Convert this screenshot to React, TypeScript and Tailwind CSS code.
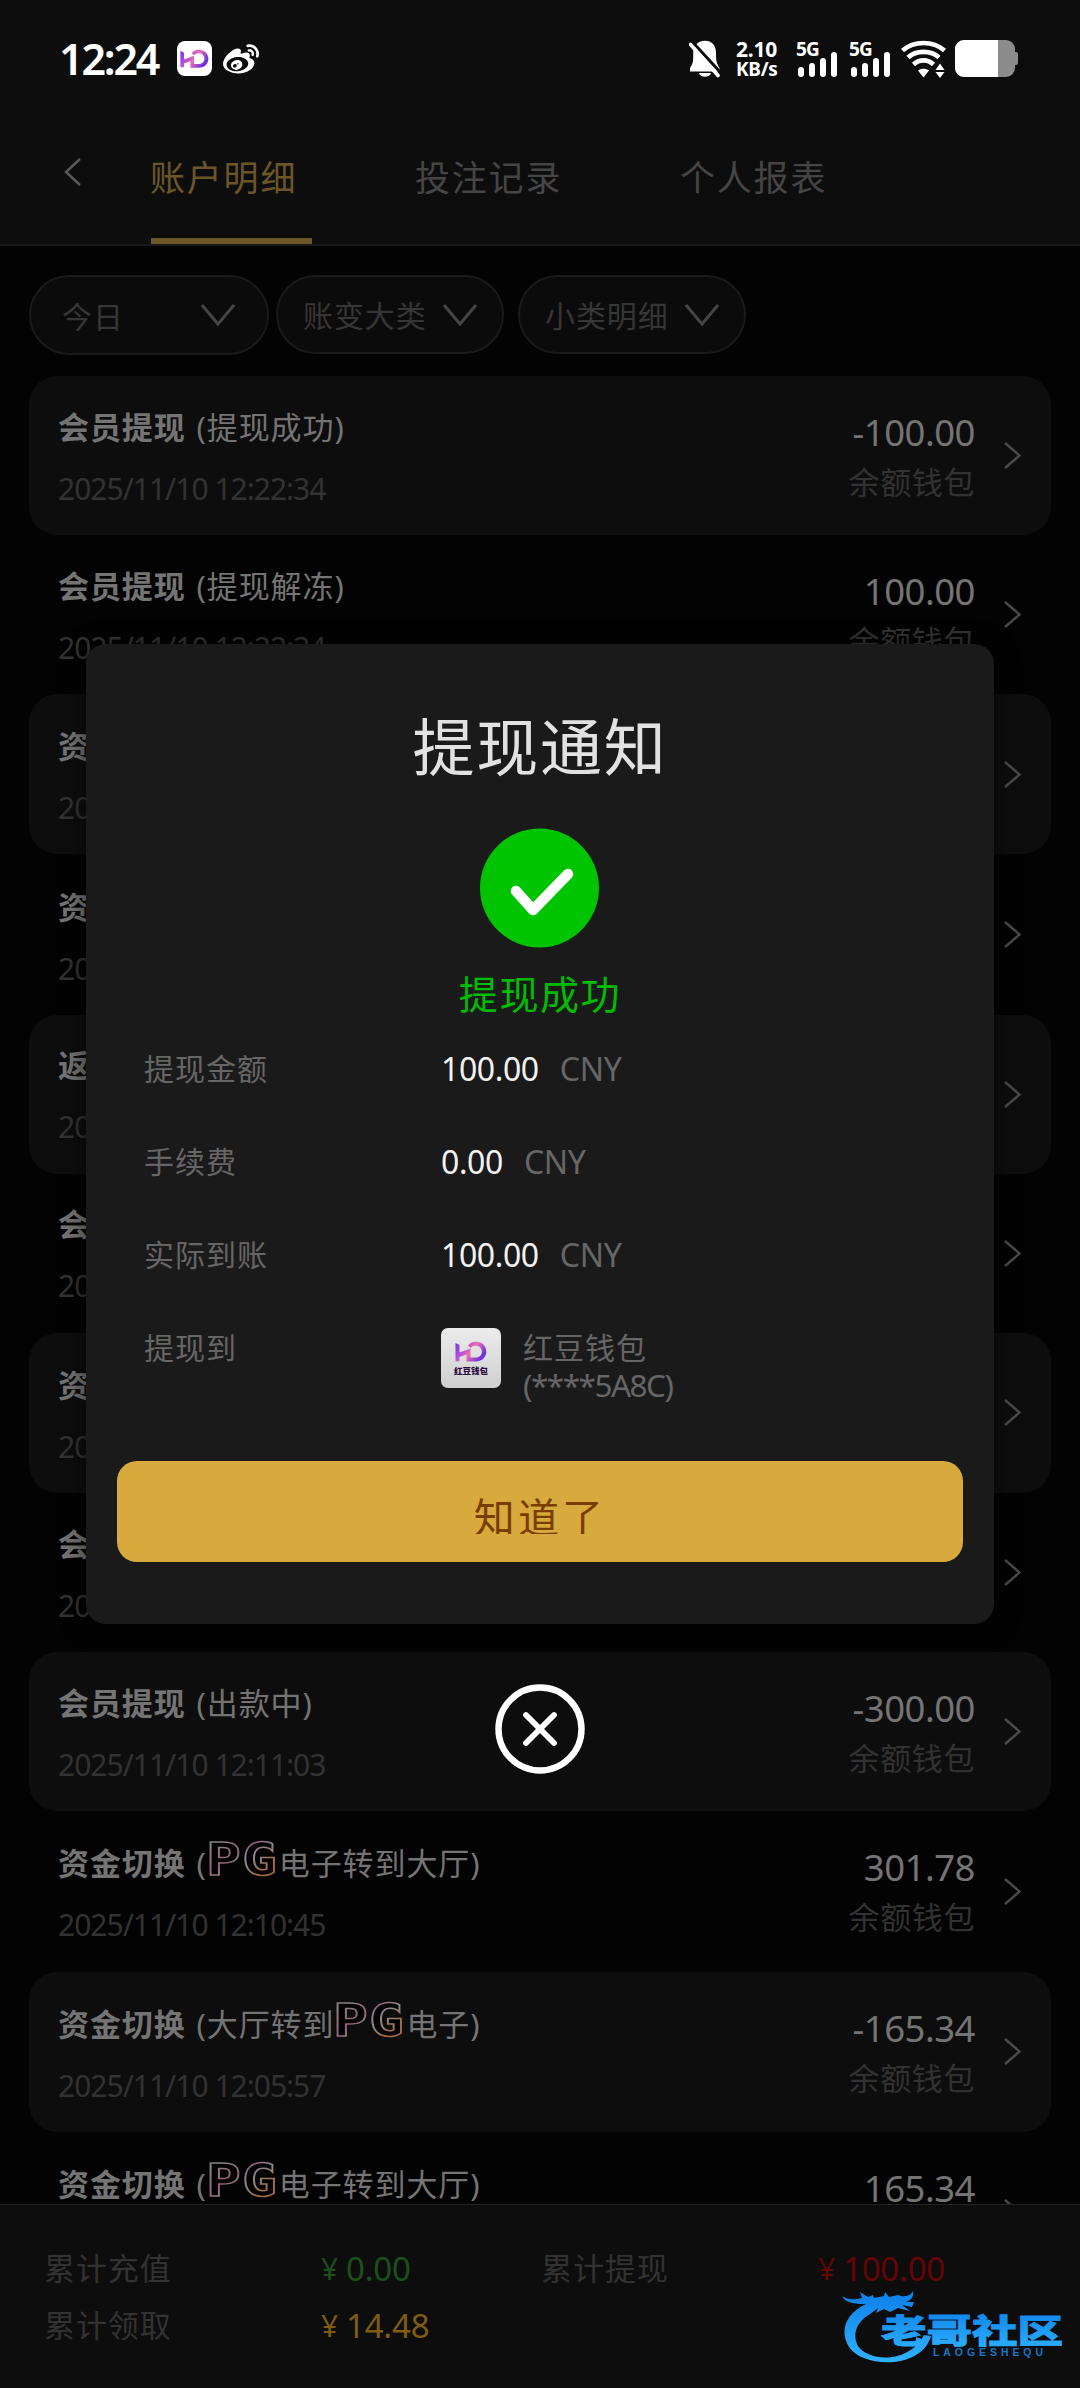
import React from "react";
import { FaWeibo } from "react-icons/fa";

type Part = { logo?: boolean; text: string };
type Entry = {
  title: string;
  parts?: Part[];
  time: string;
  amount?: string;
  tall?: boolean;
};

const entries: Entry[] = [
  { title: "会员提现", parts: [{ text: "(提现成功)" }], time: "2025/11/10 12:22:34", amount: "-100.00" },
  { title: "会员提现", parts: [{ text: "(提现解冻)" }], time: "2025/11/10 12:22:34", amount: "100.00" },
  { title: "资金", time: "2025", tall: true },
  { title: "资金", time: "2025", tall: true },
  { title: "返水", time: "2025" },
  { title: "会员", time: "2025" },
  { title: "资金", time: "2025", tall: true },
  { title: "会员", time: "2025" },
  { title: "会员提现", parts: [{ text: "(出款中)" }], time: "2025/11/10 12:11:03", amount: "-300.00" },
  {
    title: "资金切换",
    parts: [{ text: "(" }, { logo: true, text: "PG" }, { text: "电子转到大厅)" }],
    time: "2025/11/10 12:10:45",
    amount: "301.78",
    tall: true,
  },
  {
    title: "资金切换",
    parts: [{ text: "(大厅转到" }, { logo: true, text: "PG" }, { text: "电子)" }],
    time: "2025/11/10 12:05:57",
    amount: "-165.34",
    tall: true,
  },
  {
    title: "资金切换",
    parts: [{ text: "(" }, { logo: true, text: "PG" }, { text: "电子转到大厅)" }],
    time: "2025/11/10 12:05:40",
    amount: "165.34",
    tall: true,
  },
];

function HdMark({ id, className }: { id: string; className: string }) {
  return (
    <svg viewBox="0 0 32 22" className={className} fill="none">
      <defs>
        <linearGradient id={id} x1="0" y1="0" x2="1" y2="0.5">
          <stop offset="0" stopColor="#6a35d8" />
          <stop offset="0.35" stopColor="#b04be0" />
          <stop offset="0.6" stopColor="#ee6fb0" />
          <stop offset="1" stopColor="#6a30dc" />
        </linearGradient>
      </defs>
      <path
        d="M0.5 2 L4.5 4 V11.5 L15.5 7.5 V16.5 H20.5 C29 16.5 29 4.8 20.5 4.8 C18 4.8 17 5.6 15.6 7 L13 4.6 C15.4 1.8 17.6 0.8 20.8 0.8 C34.8 0.8 34.8 20.6 20.5 20.6 H11.5 V13.4 L4.5 16 V20.2 H0.5 Z"
        fill={`url(#${id})`}
      />
    </svg>
  );
}

function PgLogo({ text }: { text: string }) {
  return (
    <svg viewBox="0 0 70 36" className="-mt-[8px] mr-[2px] h-[36px] w-[70px] shrink-0 overflow-visible">
      <defs>
        <linearGradient id="pgStroke" x1="0" y1="0" x2="1" y2="1">
          <stop offset="0" stopColor="#5a5496" />
          <stop offset="0.15" stopColor="#8a8682" />
          <stop offset="0.4" stopColor="#94607f" />
          <stop offset="0.55" stopColor="#8a8a8a" />
          <stop offset="0.8" stopColor="#a8653c" />
          <stop offset="1" stopColor="#8e7c6e" />
        </linearGradient>
      </defs>
      <text
        x="-1"
        y="34"
        textLength="72"
        lengthAdjust="spacingAndGlyphs"
        fontFamily="DejaVu Sans Mono, monospace"
        fontWeight="700"
        fontSize="44"
        fill="#020202"
        stroke="url(#pgStroke)"
        strokeWidth="1.5"
      >
        {text}
      </text>
    </svg>
  );
}

function SignalBars({ label }: { label: string }) {
  return (
    <div className="flex h-[36px] w-[43px] flex-col">
      <span className="h-[16px] text-[19px] leading-[16px] font-bold tracking-[-0.8px]">{label}</span>
      <div className="-mt-[5px] ml-[2px] flex h-[25px] items-end gap-[5px]">
        <i className="h-[10px] w-[6px] rounded-[3px] bg-white" />
        <i className="h-[14px] w-[6px] rounded-[3px] bg-white" />
        <i className="h-[19px] w-[6px] rounded-[3px] bg-white" />
        <i className="h-[25px] w-[6px] rounded-[3px] bg-white" />
      </div>
    </div>
  );
}

function StatusBar() {
  return (
    <div className="flex h-[117px] items-center pt-0 pl-[59px] text-white">
      <span className="w-[118px] text-[43px] leading-[60px] font-semibold tracking-[-2.2px]">12:24</span>
      <div className="flex h-[35px] w-[35px] items-center justify-center rounded-[8px] bg-white">
        <HdMark id="hdSmall" className="h-[20px] w-[31px]" />
      </div>
      <FaWeibo className="mt-[2px] ml-[11px] h-[36px] w-[36px]" />
      <svg viewBox="0 0 32 38" className="ml-[430px] h-[38px] w-[32px]">
        <path
          d="M16 0.8 C24 0.8 27 6.5 27 13 C27 21 27.5 23 30.5 28 V31.5 H1 V28 C4.500 23 4.200 20 4.200 13 C4.200 6.500 8 0.800 16 0.800 Z M10 33 H22 C21 38 11 38 10 33 Z"
          fill="#fff"
        />
        <path d="M3 1.500 L32 33" stroke="#0d0d0d" strokeWidth="3" />
        <path d="M1.500 4.500 L29 35.500" stroke="#fff" strokeWidth="3.600" strokeLinecap="round" />
      </svg>
      <div className="ml-[15px] w-[60px] font-bold">
        <div className="text-[21px] leading-[20px] tracking-[-0.2px]">2.10</div>
        <div className="text-[19px] leading-[20px] tracking-[-0.3px]">KB/s</div>
      </div>
      <SignalBars label="5G" />
      <div className="ml-[10px]">
        <SignalBars label="5G" />
      </div>
      <svg viewBox="0 0 46 38" className="ml-[9px] h-[38px] w-[46px]" fill="none" stroke="#fff" strokeWidth="4.600">
        <path d="M1.500 10.500 C13 0.500 32 0.500 43.500 10.500" />
        <path d="M7 17.500 C15 10 30 10 38 17.500" />
        <path d="M12.500 24.500 C18 19 27 19 32.500 24.500" />
        <path d="M17 30.500 C20 28 25 28 28 30.500 L22.500 37.500 Z" fill="#fff" stroke="none" />
        <path d="M34.500 30 L39 23.500 L43.500 30 Z M34.500 32 H43.500 L39 38 Z" fill="#fff" stroke="none" />
      </svg>
      <div className="ml-[8px] flex items-center">
        <div className="flex h-[37px] w-[60px] overflow-hidden rounded-[9px] bg-[#8c8c8c]">
          <div className="w-[43px] bg-white" />
        </div>
        <div className="h-[13px] w-[3px] rounded-r-[2px] bg-[#8c8c8c]" />
      </div>
    </div>
  );
}

function Tabs() {
  return (
    <div className="flex h-[127px] items-start pl-[64px] text-[35px] leading-[50px] tracking-[1.8px] text-[#454545]">
      <svg viewBox="0 0 17 28" className="mt-[41px] h-[28px] w-[17px]" fill="none" stroke="#5a5a5a" strokeWidth="2.400">
        <path d="M16 1 L2 14 L16 27" />
      </svg>
      <div className="ml-[70px] flex h-[127px] w-[161px] flex-col justify-between pt-[36px] text-[#6b5627]">
        <span className="-ml-[1px]">账户明细</span>
        <div className="h-[6px] bg-[#6b5627]" />
      </div>
      <span className="ml-[103px] w-[160px] pt-[36px]">投注记录</span>
      <span className="ml-[105px] w-[160px] pt-[36px]">个人报表</span>
    </div>
  );
}

function Down() {
  return (
    <svg viewBox="0 0 34 22" className="h-[22px] w-[34px]" fill="none" stroke="#454545" strokeWidth="3">
      <path d="M1 1 L17 20 L33 1" />
    </svg>
  );
}

function Filters() {
  return (
    <div className="flex h-[130px] shrink-0 items-start pt-[29px] pl-[29px] text-[30px] leading-[40px] tracking-[0.9px] text-[#363636]">
      <div className="flex h-[80px] w-[240px] items-center justify-between rounded-full border-[2px] border-[#1a1a1a] bg-[#0b0b0b] pr-[32px] pl-[31px]">
        <span className="pt-[4px]">今日</span>
        <Down />
      </div>
      <div className="ml-[7px] flex h-[79px] w-[228px] items-center justify-between rounded-full border-[2px] border-[#1a1a1a] bg-[#0b0b0b] pr-[25px] pl-[25px]">
        <span className="pt-[3px]">账变大类</span>
        <Down />
      </div>
      <div className="ml-[14px] flex h-[79px] w-[228px] items-center justify-between rounded-full border-[2px] border-[#1a1a1a] bg-[#0b0b0b] pr-[25px] pl-[25px]">
        <span className="pt-[3px]">小类明细</span>
        <Down />
      </div>
    </div>
  );
}

function Row({ entry, shaded }: { entry: Entry; shaded: boolean }) {
  return (
    <div
      className={`mx-[29px] flex shrink-0 items-center rounded-[28px] pr-[30px] pl-[29px] ${
        entry.tall ? "h-[160.4px]" : "h-[159px]"
      } ${shaded ? "bg-[#0d0d0d]" : ""}`}
    >
      <div className={`flex-1 ${entry.tall ? "pt-[6px]" : "pt-[4px]"}`}>
        <div className="flex h-[50px] items-center text-[31px] leading-[50px] tracking-[0.9px] whitespace-pre text-[#747474]">
          <span className="font-bold">{entry.title}</span>
          <span className="w-[11px]" />
          {entry.parts?.map((part, i) =>
            part.logo ? <PgLogo key={i} text={part.text} /> : <span key={i}>{part.text}</span>
          )}
        </div>
        <div className="mt-[12px] h-[50px] text-[30px] leading-[50px] tracking-[-1px] text-[#323232]">{entry.time}</div>
      </div>
      {entry.amount && (
        <div className="mr-[29px] flex flex-col items-end pt-[2px]">
          <div className="h-[50px] text-[36.5px] leading-[50px] tracking-[-0.5px] text-[#747474]">{entry.amount}</div>
          <div className="h-[50px] text-[31px] leading-[50px] tracking-[0.6px] text-[#323232]">余额钱包</div>
        </div>
      )}
      <svg viewBox="0 0 17 27" className="h-[27px] w-[17px]" fill="none" stroke="#4a4a4a" strokeWidth="2.400">
        <path d="M1 1 L15.500 13.500 L1 26" />
      </svg>
    </div>
  );
}

function Total({ label, value, tone }: { label: string; value: string; tone: string }) {
  return (
    <div className="flex h-[57px] w-[497px] items-center leading-[57px]">
      <span className="w-[277px] text-[31px] tracking-[0.9px] text-[#323232]">{label}</span>
      <span className={`flex gap-[8px] text-[33px] tracking-[-0.2px] ${tone}`}>
        <span className="text-[30px]">¥</span>
        <span>{value}</span>
      </span>
    </div>
  );
}

function Watermark() {
  return (
    <svg viewBox="0 0 225 78" className="absolute top-[86px] left-[840px] h-[78px] w-[225px]">
      <defs>
        <linearGradient id="wm" x1="0" y1="0" x2="0" y2="1">
          <stop offset="0" stopColor="#0c7fe8" />
          <stop offset="1" stopColor="#2fb2ff" />
        </linearGradient>
      </defs>
      <path
        d="M2 5 C8 9 14 9 22 7 L20 1 L28 6 L33 4 L34 7 L44 5 L45 1 L49 6 L58 4 C66 7 71 4 73 0 C74 5 72 9 66 11 L74 11 L72 16 L62 14 L70 20 L58 17 L50 21 L44 18 L36 22 L38 17 L30 23 C16 31 12 44 18 55 C28 70 68 74 84 44 L91 45 C82 78 24 78 9 56 C-1 40 6 22 26 13 C18 13 6 13 2 5 Z"
        fill="url(#wm)"
      />
      <text
        x="41"
        y="51.500"
        textLength="182"
        lengthAdjust="spacingAndGlyphs"
        fontFamily="Noto Sans CJK SC, sans-serif"
        fontWeight="900"
        fontSize="33"
        fill="url(#wm)"
        stroke="url(#wm)"
        strokeWidth="0.8"
      >
        老哥社区
      </text>
      <text
        x="93"
        y="64.500"
        textLength="110"
        fontFamily="Liberation Sans, sans-serif"
        fontWeight="700"
        fontSize="10.500"
        fill="#1678c4"
      >
        LAOGESHEQU
      </text>
    </svg>
  );
}

function Detail({ label, value }: { label: string; value: string }) {
  return (
    <div className="flex h-[93px] items-center text-[30px] text-[#666]">
      <span className="w-[297px] tracking-[1px]">{label}</span>
      <span className="text-[32px] tracking-[-0.4px] text-[#f2f2f2]">{value}</span>
      <span className="ml-[21px] text-[32px] tracking-[-0.3px]">CNY</span>
    </div>
  );
}

function Notice() {
  return (
    <div className="absolute inset-0 flex flex-col items-center pt-[644px]">
      <div className="flex h-[980px] w-[908px] flex-col items-center rounded-[20px] bg-[#1a1a1a] shadow-[0_4px_24px_rgba(0,0,0,0.6)]">
        <h1 className="mt-[63px] text-[62px] leading-[80px] tracking-[1.8px] text-[#e2e2e2]">提现通知</h1>
        <svg viewBox="0 0 120 120" className="mt-[41px] h-[120px] w-[120px]">
          <circle cx="59.500" cy="60" r="59.500" fill="#00c400" />
          <path
            d="M36 63 L53 82 L88 46"
            fill="none"
            stroke="#fff"
            strokeWidth="10.500"
            strokeLinecap="round"
            strokeLinejoin="round"
          />
        </svg>
        <div className="mt-[21px] text-[39px] leading-[50px] tracking-[1.6px] text-[#00bc00]">提现成功</div>
        <div className="mt-[3px] w-full pl-[58px]">
          <Detail label="提现金额" value="100.00" />
          <Detail label="手续费" value="0.00" />
          <Detail label="实际到账" value="100.00" />
          <div className="flex items-start text-[30px] leading-[37px] text-[#666]">
            <span className="w-[297px] pt-[28px] tracking-[1px]">提现到</span>
            <div className="mt-[27px] flex h-[60px] w-[60px] flex-col items-center rounded-[7px] bg-linear-to-b from-[#ececec] to-[#cfcfcf] pt-[13px]">
              <HdMark id="hdLarge" className="h-[22px] w-[34px]" />
              <span className="mt-[3px] text-[8.5px] leading-[9px] font-black text-[#2a0a3c]">红豆钱包</span>
            </div>
            <div className="ml-[22px] pt-[28px]">
              <div className="tracking-[1px]">红豆钱包</div>
              <div className="text-[31.5px] leading-[37px] tracking-[-1.5px]">(****5A8C)</div>
            </div>
          </div>
        </div>
        <button className="mt-[58px] flex h-[101px] w-[846px] justify-center rounded-[20px] bg-[#d8aa3e] text-[#7a3d00]">
          <span className="mt-[31px] block h-[42px] overflow-hidden text-[41px] leading-[51px] tracking-[3.2px]">
            知道了
          </span>
        </button>
      </div>
      <svg viewBox="0 0 90 90" className="mt-[60px] h-[90px] w-[90px]" fill="none" stroke="#fff" strokeLinecap="round">
        <circle cx="45" cy="45" r="41.500" strokeWidth="6.400" />
        <path d="M31 31 L59 59 M59 31 L31 59" strokeWidth="5.800" />
      </svg>
    </div>
  );
}

export default function App() {
  return (
    <div className="relative flex h-[2388px] w-[1080px] flex-col overflow-hidden bg-[#030303] font-['Noto_Sans','Noto_Sans_CJK_SC',sans-serif]">
      <header className="h-[246px] shrink-0 border-b-[2px] border-[#1a1a1a] bg-[#0d0d0d]">
        <StatusBar />
        <Tabs />
      </header>
      <Filters />
      <main className="flex min-h-0 flex-1 flex-col overflow-hidden">
        {entries.map((entry, i) => (
          <Row key={i} entry={entry} shaded={i % 2 === 0} />
        ))}
      </main>
      <footer className="relative h-[184px] shrink-0 border-t border-[#222] bg-[#0d0d0d] pt-[35px] pl-[44px]">
        <div className="flex flex-wrap">
          <Total label="累计充值" value="0.00" tone="text-[#1c4f1c]" />
          <Total label="累计提现" value="100.00" tone="text-[#640505]" />
          <Total label="累计领取" value="14.48" tone="text-[#7f5c10]" />
        </div>
        <Watermark />
      </footer>
      <Notice />
    </div>
  );
}
